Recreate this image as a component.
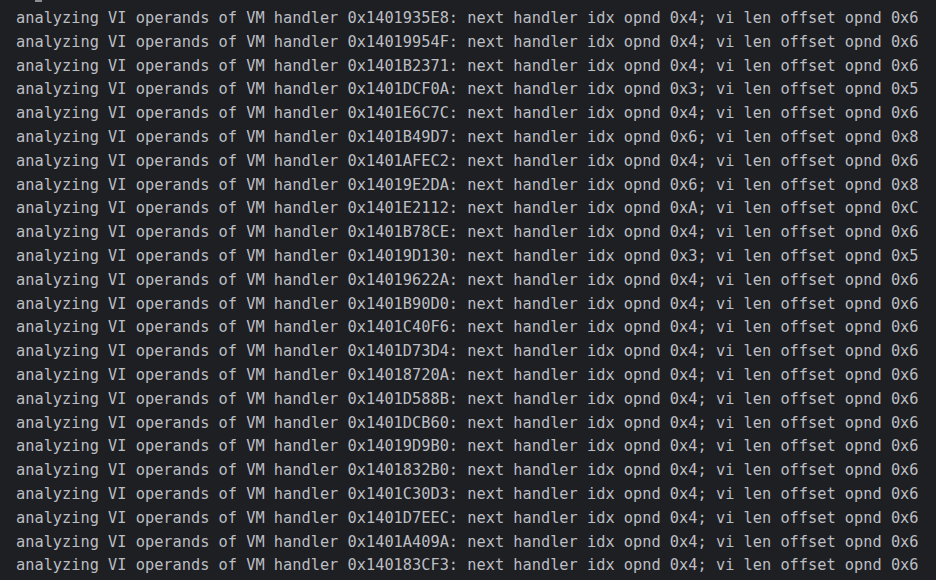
const rows: [string, string, string][] = [
  ["0x1401935E8", "0x4", "0x6"],
  ["0x14019954F", "0x4", "0x6"],
  ["0x1401B2371", "0x4", "0x6"],
  ["0x1401DCF0A", "0x3", "0x5"],
  ["0x1401E6C7C", "0x4", "0x6"],
  ["0x1401B49D7", "0x6", "0x8"],
  ["0x1401AFEC2", "0x4", "0x6"],
  ["0x14019E2DA", "0x6", "0x8"],
  ["0x1401E2112", "0xA", "0xC"],
  ["0x1401B78CE", "0x4", "0x6"],
  ["0x14019D130", "0x3", "0x5"],
  ["0x14019622A", "0x4", "0x6"],
  ["0x1401B90D0", "0x4", "0x6"],
  ["0x1401C40F6", "0x4", "0x6"],
  ["0x1401D73D4", "0x4", "0x6"],
  ["0x14018720A", "0x4", "0x6"],
  ["0x1401D588B", "0x4", "0x6"],
  ["0x1401DCB60", "0x4", "0x6"],
  ["0x14019D9B0", "0x4", "0x6"],
  ["0x1401832B0", "0x4", "0x6"],
  ["0x1401C30D3", "0x4", "0x6"],
  ["0x1401D7EEC", "0x4", "0x6"],
  ["0x1401A409A", "0x4", "0x6"],
  ["0x140183CF3", "0x4", "0x6"],
];

export default function App() {
  return (
    <div className="w-[936px] h-[580px] overflow-hidden bg-[#1e1f22] text-[#bcbec4] font-['DejaVu_Sans_Mono',monospace] text-[15.3px] leading-[23.8px]">
      {/* tail of the previous line, cut off by the window edge */}
      <div className="h-[7px] pl-[35px]">
        <div className="w-[7px] h-[2px] bg-[#8c8e93]" />
      </div>
      <div className="pl-[16px] whitespace-pre">
        {rows.map(([addr, idx, len]) => (
          <div key={addr}>
            {`analyzing VI operands of VM handler ${addr}: next handler idx opnd ${idx}; vi len offset opnd ${len}`}
          </div>
        ))}
      </div>
    </div>
  );
}
